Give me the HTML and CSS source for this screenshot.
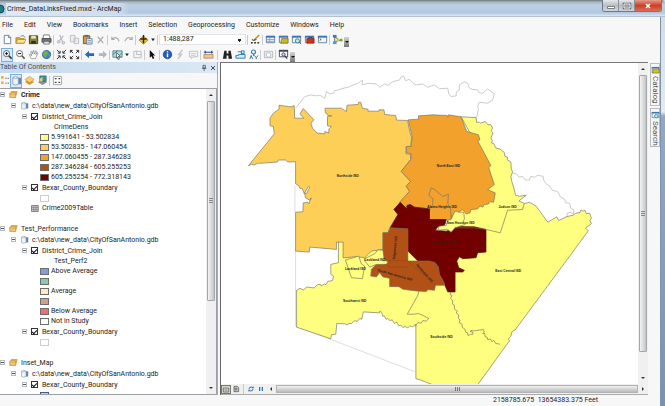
FILE: index.html
```html
<!DOCTYPE html>
<html lang="en">
<head>
<meta charset="utf-8">
<title>Crime_DataLinksFixed.mxd - ArcMap</title>
<link rel="stylesheet" href="styles.css">
</head>
<body>
<svg class="defs" aria-hidden="true">
  <symbol id="caret" viewBox="0 0 6 12"><path d="M1 5h4l-2 3z" fill="#222"/></symbol>
  <symbol id="win" viewBox="0 0 12 12"><path d="M1.500 2.500h9v7h-9z" fill="#eef5fc" stroke="#67809c"/><path d="M1 2h10v2H1z" fill="#3f74b8"/></symbol>
  <symbol id="frames" viewBox="0 0 12 12"><path d="M3 2h8l-2 6H2z" fill="#f3b44c" stroke="#b87a1e" stroke-width=".7"/><path d="M1 4h8v6H1z" fill="#fbd98c" stroke="#b87a1e" stroke-width=".8"/><path d="M1 6h8M1 8h8" stroke="#cf9335" stroke-width=".7"/></symbol>
  <symbol id="db" viewBox="0 0 12 12"><path d="M6 3h5v7H6z" fill="#5b87b9"/><path d="M2 3q3-3 6 0v7q-3 2-6 0z" fill="#eef3f8" stroke="#8297ae" stroke-width=".8"/><path d="M2 3q3 2 6 0" fill="none" stroke="#8297ae" stroke-width=".7"/></symbol>
</svg>
<div class="window">
  <header class="titlebar">
    <svg class="app-icon" viewBox="0 0 6 12"><circle cx="0" cy="6" r="4" fill="#1f7f83" stroke="#174a50"/></svg>
    <h1>Crime_DataLinksFixed.mxd - ArcMap</h1>
    <div class="winbtns">
      <button aria-label="Minimize"><svg viewBox="0 0 16 10"><path d="M4.500 5.500h7v2h-7z" fill="#fff" stroke="#666" stroke-width=".8"/></svg></button>
      <button aria-label="Maximize"><svg viewBox="0 0 16 10"><path d="M5 3h6v4H5z" fill="none" stroke="#666" stroke-width="2.400"/><path d="M5 3h6v4H5z" fill="none" stroke="#fff"/></svg></button>
      <button class="close" aria-label="Close"><svg viewBox="0 0 16 10"><path d="M6 3l4 4M10 3L6 7" stroke="#fff" stroke-width="1.600"/></svg></button>
    </div>
  </header>
  <div class="body">
    <nav class="menubar">
      <button>File</button><button>Edit</button><button>View</button><button>Bookmarks</button><button>Insert</button><button>Selection</button><button>Geoprocessing</button><button>Customize</button><button>Windows</button><button>Help</button>
    </nav>
    <div class="toolbar">
      <button aria-label="New"><svg viewBox="0 0 12 12"><path d="M2.500 1.500h5l2 2v7h-7z" fill="#fff" stroke="#6b7f95"/><path d="M7 1.500v2.500h2.500" fill="none" stroke="#6b7f95"/></svg></button>
      <button aria-label="Open"><svg viewBox="0 0 12 12"><path d="M1 4h4l1 1h4v5H1z" fill="#e6b432" stroke="#8c6d12" stroke-width=".7"/><path d="M3 6h9l-2 4H1z" fill="#ffe28a" stroke="#a78118" stroke-width=".7"/><path d="M6 3q3-3 5 1" fill="none" stroke="#5b7b9a"/></svg></button>
      <button aria-label="Save"><svg viewBox="0 0 12 12"><path d="M1.500 2h9v8.500h-9z" fill="#8a8434" stroke="#3c3a1b"/><path d="M3.500 2h5v3h-5z" fill="#e4e4d8"/><path d="M3.500 7.500h5v3h-5z" fill="#2e2e2a"/></svg></button>
      <button aria-label="Print"><svg viewBox="0 0 12 12"><path d="M3 1h6l1 4H2z" fill="#fff" stroke="#555" stroke-width=".8"/><path d="M1 5h10v4H1z" fill="#777" stroke="#333" stroke-width=".7"/><path d="M3 8h6v3H3z" fill="#e9e9e9" stroke="#444" stroke-width=".7"/></svg></button>
      <i class="sep"></i>
      <button aria-label="Cut"><svg viewBox="0 0 12 12" fill="none" stroke="#b5bac0" stroke-width="1.300"><path d="M4 1l3 7M8 2L4 7"/><circle cx="3" cy="8.500" r="1.300"/><circle cx="8" cy="9.500" r="1.300"/></svg></button>
      <button aria-label="Copy"><svg viewBox="0 0 12 12" fill="#eee" stroke="#b9bcc0"><path d="M1.500 1.500h5v7h-5zM5.500 4.500h5v6h-5z"/></svg></button>
      <button aria-label="Paste"><svg viewBox="0 0 12 12"><path d="M1.500 2h7v8.500h-7z" fill="#d99a3a" stroke="#75501d"/><path d="M3 1h4v2H3z" fill="#667"/><path d="M5 5h6v6H5z" fill="#eaf2fb" stroke="#4d6e9b" stroke-width=".8"/><path d="M6 7h4M6 9h4" stroke="#4d6e9b" stroke-width=".7"/></svg></button>
      <button aria-label="Delete"><svg viewBox="0 0 12 12"><path d="M3 3l6 7M9 3l-6 7" stroke="#a5a9ad" stroke-width="1.300"/></svg></button>
      <i class="sep"></i>
      <button aria-label="Undo"><svg viewBox="0 0 12 12"><path d="M2 3v3h3M2 6q5-5 8 2" fill="none" stroke="#a9adb2" stroke-width="1.300"/></svg></button>
      <button aria-label="Redo"><svg viewBox="0 0 12 12"><path d="M10 3v3H7M10 6Q5 1 2 8" fill="none" stroke="#a9adb2" stroke-width="1.300"/></svg></button>
      <i class="sep"></i>
      <button aria-label="Add data"><svg viewBox="0 0 12 12"><path d="M1 6.500l5-4 5 4-5 4.500z" fill="#f7c437" stroke="#9c741a" stroke-width=".8"/><path d="M6 1v9M2.500 5.500h7" stroke="#2a2412" stroke-width="1.600"/></svg></button>
      <button class="drop" aria-label="Add data options"><svg viewBox="0 0 6 12"><use href="#caret"/></svg></button>
      <i class="sep"></i>
      <select class="scale" aria-label="Map scale"><option>1:488,287</option></select>
      <i class="sep"></i>
      <button aria-label="Editor toolbar"><svg viewBox="0 0 12 12"><path d="M1 9.500h10" stroke="#333" stroke-width="1.500" stroke-dasharray="2 1.500"/><path d="M4 7l6-6" stroke="#c08f26" stroke-width="1.600"/><path d="M2 6l2 1 3-1" stroke="#333" fill="none"/></svg></button>
      <i class="sep"></i>
      <button aria-label="Table of contents"><svg viewBox="0 0 12 12"><use href="#win"/><path d="M2 6h8M2 8h8M5 4v5" stroke="#6ba0db" stroke-width=".9"/></svg></button>
      <button aria-label="Catalog window"><svg viewBox="0 0 12 12"><use href="#win"/><path d="M4 5h7v5H3z" fill="#c9b72c" stroke="#6b6a16" stroke-width=".7"/></svg></button>
      <button aria-label="Search window"><svg viewBox="0 0 12 12"><use href="#win"/><circle cx="7" cy="7.500" r="2.300" fill="#bfe7dc" stroke="#2c8a76"/><path d="M9 9l2 2" stroke="#2c6a76"/></svg></button>
      <button aria-label="ArcToolbox"><svg viewBox="0 0 12 12"><use href="#win"/><path d="M3 5h8v5H3z" fill="#d3301f" stroke="#7a1810" stroke-width=".7"/><path d="M5 5V4h4v1" stroke="#7a1810" fill="none"/></svg></button>
      <button aria-label="Python window"><svg viewBox="0 0 12 12"><use href="#win"/><path d="M3 5l1.500 1L3 7" fill="none" stroke="#333" stroke-width=".8"/></svg></button>
      <i class="sep"></i>
      <button aria-label="ModelBuilder"><svg viewBox="0 0 12 12"><path d="M3 3v6M3 3l4 3M3 9l4-2h3" stroke="#446" fill="none" stroke-width=".9"/><path d="M1 1h4v3H1z" fill="#377fc4"/><path d="M1 8h4v3H1z" fill="#49a0c9"/><path d="M5 5h3v3H5z" fill="#e0c136"/><circle cx="10" cy="6.500" r="1.700" fill="#5fac53"/></svg></button>
      <button class="more" aria-label="Toolbar options"></button>
    </div>
    <div class="toolbar">
      <button class="on" aria-label="Zoom in"><svg viewBox="0 0 12 12"><circle cx="5" cy="5" r="3.300" fill="#fff" stroke="#555"/><path d="M3.300 5h3.400M5 3.300v3.400" stroke="#111"/><path d="M7.500 7.500l3 3" stroke="#333" stroke-width="1.800"/></svg></button>
      <button aria-label="Zoom out"><svg viewBox="0 0 12 12"><circle cx="5" cy="5" r="3.300" fill="#fff" stroke="#666"/><path d="M3.300 5h3.400" stroke="#111"/><path d="M7.500 7.500l3 3" stroke="#555" stroke-width="1.600"/></svg></button>
      <button aria-label="Pan"><svg viewBox="0 0 12 12"><path d="M3.500 10.500L1.500 6l1.500 0 1 1.500L3 3l1-.5 1 3L5.500 2l1-.3.3 3.800L8.500 2l.8.600L8.500 6l1.500-2 .7.500L9 8.500l-1 2z" fill="#fff" stroke="#848990" stroke-width=".8"/></svg></button>
      <button aria-label="Full extent"><svg viewBox="0 0 12 12"><circle cx="6" cy="6" r="4.500" fill="#3f86c8" stroke="#2a5378" stroke-width=".8"/><path d="M3 3q3-2 5 1l-2 3-1 3q-3-2-3-5zM8 6l2 0-1 3z" fill="#6fae57"/></svg></button>
      <i class="sep"></i>
      <button aria-label="Fixed zoom in"><svg viewBox="0 0 12 12" stroke="#222" fill="none"><path d="M1 1l3 3M11 1L8 4M1 11l3-3M11 11L8 8"/><path d="M2 4.500h2.500V2M10 4.500H7.500V2M2 7.500h2.500V10M10 7.500H7.500V10"/></svg></button>
      <button aria-label="Fixed zoom out"><svg viewBox="0 0 12 12" stroke="#222" fill="none"><path d="M1.500 1.500l3 3M10.500 1.500l-3 3M1.500 10.500l3-3M10.500 10.500l-3-3M1.500 4V1.500H4M8 1.500h2.500V4M1.500 8v2.500H4M8 10.500h2.500V8"/></svg></button>
      <i class="sep"></i>
      <button aria-label="Back"><svg viewBox="0 0 12 12"><path d="M1 6l4.500-4v2.500H11v3H5.500V10z" fill="#2466c0"/></svg></button>
      <button aria-label="Forward"><svg viewBox="0 0 12 12"><path d="M11 6L6.500 2v2.500H2v3h4.500V10z" fill="#b3b7bc"/></svg></button>
      <i class="sep"></i>
      <button aria-label="Select features"><svg viewBox="0 0 12 12"><path d="M1 2h10v7H1z" fill="#b6dcd7" stroke="#3a7c8c" stroke-width=".9"/><path d="M1 6l5-4M6 9l5-5" stroke="#3a7c8c"/><path d="M5 4l4 4H7l1 3-1.500.4-.8-2.600L5 10z" fill="#fff" stroke="#234" stroke-width=".7"/></svg></button>
      <button class="drop" aria-label="Selection options"><svg viewBox="0 0 6 12"><use href="#caret"/></svg></button>
      <button aria-label="Clear selection"><svg viewBox="0 0 12 12"><path d="M2 2.500h8v7H2zM5 2v4h5" fill="#f4f4f4" stroke="#b9bcc0"/></svg></button>
      <i class="sep"></i>
      <button aria-label="Select elements"><svg viewBox="0 0 12 12"><path d="M3 1l6 6H6.500L8 10l-1.700.9L5 7.800 3 9.500z" fill="#111"/></svg></button>
      <i class="sep"></i>
      <button aria-label="Identify"><svg viewBox="0 0 12 12"><circle cx="6" cy="6" r="4.700" fill="#2360b5" stroke="#173f7d" stroke-width=".7"/><path d="M6 5v4M6 2.500v1.300" stroke="#fff" stroke-width="1.500"/></svg></button>
      <button aria-label="Hyperlink"><svg viewBox="0 0 12 12"><path d="M8 1L4 6h3l-4 5" fill="none" stroke="#c0c3c7" stroke-width="1.500"/></svg></button>
      <button aria-label="HTML popup"><svg viewBox="0 0 12 12"><path d="M1.500 2.500h9v6h-5l-2 2v-2h-2z" fill="#f5f5f5" stroke="#bcbfc3"/><path d="M3 5h6M3 7h5" stroke="#bcbfc3" stroke-width=".8"/></svg></button>
      <i class="sep"></i>
      <button aria-label="Measure"><svg viewBox="0 0 12 12"><path d="M1 6h10v4H1z" fill="#f1c59b" stroke="#a66c3a" stroke-width=".7"/><path d="M1 3.500h10M2.500 2v3M9.500 2v3" stroke="#1d4f9e" stroke-width="1.200"/></svg></button>
      <i class="sep wide"></i>
      <button aria-label="Find"><svg viewBox="0 0 12 12"><path d="M2.500 2h2.500v3h2V2h2.500l1.500 8.500H7V7H5v3.500H1z" fill="#222"/></svg></button>
      <button aria-label="Go to XY"><svg viewBox="0 0 12 12"><path d="M4 6h7v4H1V7h3zM7 2h3v3H7z" fill="#d7ecf7" stroke="#2c7ca9"/><path d="M3 3h4v3" fill="none" stroke="#2c7ca9"/></svg></button>
      <button aria-label="Find route"><svg viewBox="0 0 12 12"><circle cx="6" cy="3.300" r="2.200" fill="none" stroke="#2c82b4" stroke-width="1.300"/><path d="M6 5.500v2M2 11l1.500-4L5 11M7 7l2 2.500L11 7M9 9.500V11" stroke="#2c6e96" fill="none"/></svg></button>
      <i class="sep"></i>
      <button aria-label="Time slider"><svg viewBox="0 0 12 12"><path d="M1.500 2.500h9v7h-9z" fill="#eee" stroke="#b6babf"/><circle cx="6" cy="6.500" r="2.500" fill="#fff" stroke="#b6babf"/></svg></button>
      <i class="sep"></i>
      <button aria-label="Viewer window"><svg viewBox="0 0 12 12"><path d="M1.500 1.500h9v7h-9z" fill="#fff" stroke="#445"/><path d="M1 1h10v2H1z" fill="#445"/><circle cx="6" cy="6" r="1.800" fill="#cde" stroke="#446"/><path d="M7.500 7.500l2.500 3" stroke="#334" stroke-width="1.300"/></svg></button>
      <button class="more" aria-label="Toolbar options"></button>
    </div>
    <div class="work">
      <aside class="toc">
        <div class="toc-head"><h2>Table Of Contents</h2>
          <button aria-label="Auto hide"><svg viewBox="0 0 12 12"><path d="M4.500 2h3.500v4H4.500zM3 6.500h6.500M6.200 7v3.500" fill="none" stroke="#333"/></svg></button>
          <button aria-label="Close panel"><svg viewBox="0 0 12 12"><path d="M3 3l6 6M9 3L3 9" stroke="#333" stroke-width="1.300"/></svg></button>
        </div>
        <div class="toolbar toc-tools">
          <button class="half" aria-label="List by drawing order"><svg viewBox="3 0 9 12"><path d="M3 1h3v3H3zM3 7h3v3H3z" fill="#e8b63f"/><path d="M8 3.500h4M8 9h4" stroke="#555" stroke-dasharray="1.500 1"/></svg></button>
          <button class="on" aria-label="List by source"><svg viewBox="0 0 12 12"><use href="#db"/></svg></button>
          <button aria-label="List by visibility"><svg viewBox="0 0 12 12"><path d="M1 7.500l5-3 5 3L6 11z" fill="#d59a32"/><path d="M1 5l5-3.500L11 5 6 8.500z" fill="#fbd06a" stroke="#b88229" stroke-width=".6"/></svg></button>
          <button aria-label="List by selection"><svg viewBox="0 0 12 12"><path d="M1 8l5-3 5 3-5 3z" fill="#8e9294"/><path d="M3 1h7v6H3z" fill="#37939a" stroke="#22636b" stroke-width=".7"/><path d="M3 4l3-2v5H3z" fill="#e8cf67"/></svg></button>
          <i class="sep"></i>
          <button aria-label="Options"><svg viewBox="0 0 12 12"><path d="M1.500 1.500h9v9h-9z" fill="#fff" stroke="#9aa3ad"/><path d="M3 4h2M3 8h2M7 4h2M7 8h2" stroke="#444" stroke-width="1.300"/></svg></button>
        </div>
        <div class="tree-box">
          <div class="tree">
            <div class="row head"><button class="tw" aria-label="Collapse"></button><svg class="ic" viewBox="0 0 12 12"><use href="#frames"/></svg><b>Crime</b></div>
            <div class="row head l1"><button class="tw" aria-label="Collapse"></button><svg class="ic" viewBox="0 0 12 12"><use href="#db"/></svg><span>c:\data\new_data\CityOfSanAntonio.gdb</span></div>
            <div class="row head l2"><button class="tw" aria-label="Collapse"></button><label><input type="checkbox" checked>District_Crime_Join</label></div>
            <div class="row field">CrimeDens</div>
            <div class="row leg"><i class="sw c1"></i>5.991641 - 53.502834</div>
            <div class="row leg"><i class="sw c2"></i>53.502835 - 147.060454</div>
            <div class="row leg"><i class="sw c3"></i>147.060455 - 287.346283</div>
            <div class="row leg"><i class="sw c4"></i>287.346284 - 605.255253</div>
            <div class="row leg"><i class="sw c5"></i>605.255254 - 772.318143</div>
            <div class="row head l2"><button class="tw" aria-label="Collapse"></button><label><input type="checkbox" checked>Bexar_County_Boundary</label></div>
            <div class="row leg"><i class="sw pale"></i></div>
            <div class="row table"><svg class="ic" viewBox="0 0 12 12"><path d="M2 2h9v8H2z" fill="#ccc" stroke="#666"/><path d="M2 4.700h9M2 7.300h9M5 2v8M8 2v8" stroke="#777" stroke-width=".8"/></svg>Crime2009Table</div>
            <div class="row"></div>
            <div class="row head"><button class="tw" aria-label="Collapse"></button><svg class="ic" viewBox="0 0 12 12"><use href="#frames"/></svg><span>Test_Performance</span></div>
            <div class="row head l1"><button class="tw" aria-label="Collapse"></button><svg class="ic" viewBox="0 0 12 12"><use href="#db"/></svg><span>c:\data\new_data\CityOfSanAntonio.gdb</span></div>
            <div class="row head l2"><button class="tw" aria-label="Collapse"></button><label><input type="checkbox" checked>District_Crime_Join</label></div>
            <div class="row field">Test_Perf2</div>
            <div class="row leg"><i class="sw p1"></i>Above Average</div>
            <div class="row leg"><i class="sw p2"></i></div>
            <div class="row leg"><i class="sw p3"></i>Average</div>
            <div class="row leg"><i class="sw p4"></i></div>
            <div class="row leg"><i class="sw p5"></i>Below Average</div>
            <div class="row leg"><i class="sw"></i>Not in Study</div>
            <div class="row head l2"><button class="tw" aria-label="Collapse"></button><label><input type="checkbox" checked>Bexar_County_Boundary</label></div>
            <div class="row leg"><i class="sw pale"></i></div>
            <div class="row"></div>
            <div class="row head"><button class="tw" aria-label="Collapse"></button><svg class="ic" viewBox="0 0 12 12"><use href="#frames"/></svg><span>Inset_Map</span></div>
            <div class="row head l1"><button class="tw" aria-label="Collapse"></button><svg class="ic" viewBox="0 0 12 12"><use href="#db"/></svg><span>c:\data\new_data\CityOfSanAntonio.gdb</span></div>
            <div class="row head l2"><button class="tw" aria-label="Collapse"></button><label><input type="checkbox" checked>Bexar_County_Boundary</label></div>
            <div class="row leg"><i class="sw p6"></i></div>
          </div>
          <div class="vbar"><i class="arr up"></i><i class="thumb t-tree"></i><i class="rest"></i><i class="arr down"></i></div>
        </div>
      </aside>
      <main class="view">
        <div class="map-row">
          <svg class="map" viewBox="666 189 1248 966" preserveAspectRatio="xMidYMid meet" role="img" aria-label="School districts by crime density">
            <g fill="none" stroke="#cbcbcb" stroke-width="3" stroke-linejoin="round">
              <path d="M887 325L915 290 935 285 950 288 960 286 975 295 980 275 990 282 1002 279 1005 272 1015 270 1030 265 1045 262 1060 255 1075 250 1082 244 1088 241 1088 255 1105 250 1130 252 1140 262 1155 252 1165 256 1180 245 1200 240 1205 230 1212 228 1218 242 1230 238 1240 250 1250 255 1270 252 1285 262 1305 255 1320 266 1345 265 1348 282 1355 290 1370 288 1371 276 1380 270 1380 255 1395 245 1405 250 1409 263 1418 268 1435 270 1440 279 1450 280 1465 267 1485 282 1480 300 1465 310 1440 307 1435 320 1437 330 1432 353"/>
              <path d="M1540 520l12 3 8 10 10-3 7 10 13 2 5-12 12 3 8-6 17 3 2 12 8 12 10 5 7 13 17 4 8 16 13 7 2 10 13 3 3 14 10 5-2 13-9-6-9 3-2 11 7-1"/>
              <path d="M885 558v80M887 755v225l359 138" stroke-width="2"/>
            </g>
            <g stroke="#77735f" stroke-width="2" stroke-linejoin="round">
              <path fill="#ffff7f" d="M1385 351l45 2 2 15 8-1 4 3 14-5 8 10 8-1 6 11-4 7 5 8-6 15 4 7-2 8 6 1 7 14 12 3 13 10 2 12 8 2-1 8 11 7 1 20 4 10-5 14 3 16 5 15 6 25 12 3 20-3-22 17 17 8 15-4 20 12 35 48 27-16 6 11 25-12 18-4 8-6 13-2 3-8 6 4 6-3 4 10 10-1 5 15-4 7 4 10-17 13 8 8-220 298-10 6-3 13-8 9 4 5-23 31-85 118h-80l-80-31-14-4V975l-10 8-8-3-6 6-9-4-6 3-6-7-7 2-6-11-7 4-6-11-8 2-5-6-6 2-5-10-5 1-3-12-6-3 0 5-49-3-5 22-6-2-7 8-10-1-7 8-10 0-3 5-7-4-25-1-3 32-13 2-2 12-103-35V873l10-6 10 5 11-9 22 3 10-10 9-1 2 5 10-6 5 2 5-10 14-2 3-14-8-5v-30l23-5V700h340v-80l90-160z"/>
              <path fill="#fdcf57" d="M745 498L823 402 820 380 810 378 810 355 820 340 837 328 837 316 865 320 878 321 880 317 883 318 884 355 912 355 900 343 910 326 942 360 933 370 938 385 952 400 975 402 975 395 987 400 987 388 995 380 983 378 983 350 996 348 983 346 980 340 976 338V325h49l15 10 2-19 33-2 2-7h6l5 18 17 3v6h33v-4h15l2 14 33 3 3 14 33 1 4 20 3 14 5 18-3 28h-14v20l14 2v16L1205 515l28 30-13 15 10 15-28 35-19 20 12 15-25 40-5 15h-15v50l-35 5-20 20-25-3-35 3h-5v-47h-20v22l-80-7-2 15-41-3V638l22-1 1-27 14-2 3 5 7-18-4 7-13-7-3-15 6 2 10-20-4-2-13 22-6-15-7-1-3-7-10-7v-66l-23 1-7-6h-22l-3 6-40 3-20 1-10 5-8-2z"/>
              <path fill="#f2a22c" d="M1226 360l31-2v-10l43-3 43 2 2 6 2-8 38 6 17 44 35 10 5 15-7 3 40 75-7 5 17 52-20 15 23 10-5 28-12-2-3 7-13 2-5 8-8-4-7 9-20 2-3 10-12 3-10-13-15 9-20 11-5 20-10-10h-50v-32l-45-5-13-8-10 3v10l-17-8-5-12 30-33-10-15 13-15-28-30 30-37v-16l-14-2v-20h14l3-28z"/>
              <path fill="#f2a22c" d="M1290 628l10-8v-23l-12-10 7-22 10 4 25 22 17-7-2 28 8 12 2 33-7 13-8-10h-50z"/>
              <path fill="#730000" stroke="#511008" d="M1172 685l23-40-12-15 19-22 20 20v-10l10-3 13 8 45 5v32h50l-5 18-20 4-7 10 32 3 20-6 5-8 60 1 35 8v68l-25 2-5 15-40 3-10-6-8 13 6 20 17 8-5 5h-23v60h-22l-10-23-70-60-60-60z"/>
              <path fill="#b15116" d="M1172 685l53 3v97h65l17 5 10 13 3 22 15 27v6h-27l-3 15-20-2-5 6-30-2-40-5-12-8h-28v-25l-20-4-10-13-10 13-17-3 2-20 15-15 25-2-5-23v-70h15z"/>
              <path fill="#ffff7f" d="M1095 778l30-15 10-12 15 2 3 25 12 10-5 7-30 0-20 8-8-10-7-8z"/>
              <path fill="#ffff7f" d="M1037 782l40-12 8 24 10 6-7 38-33-3z"/>
              <path fill="#ffff7f" d="M1365 638l5-3 8 3 15 0 2 20-4 10 6 7-30 10-12 13-10-8-30 2 4-12 21-2 5-16 10-2z"/>
              <g fill="none">
                <path d="M1575 612l-5 18-45 2-22 68-43-10-35-5h-60"/>
                <path d="M1354 878l-2 8 6 3-5 8 6 6 1 12 5 3 0 12 9 6-4 5 7 5 1 13 4 4-3 7 9 5 1 10 8 5 2 9 5 2 2 8 7-3 8-1-2-7-6 0 1-4 10 1 28-4 3 8-5 4 7 1 0 8 7 3 1 6 9-1 3 7 7-3 5 9 13 2"/>
                <path d="M1258 875l-4 15-31 55h20l14-2 14 6 17 9-9 8-9-2-5 8-10-2-9 13"/>
                <path d="M1150 784h75M1155 795l15 8 55 0M1225 785l83 73" stroke="#964817"/>
              </g>
            </g>
            <g class="labels">
              <text x="1044" y="532">Northside ISD</text>
              <text x="1347" y="503">North East ISD</text>
              <text x="1328" y="625">Alamo Heights ISD</text>
              <text x="1525" y="624">Judson ISD</text>
              <text x="1378" y="675">Ft Sam Houston ISD</text>
              <text x="1342" y="733">San Antonio ISD</text>
              <text x="1527" y="817">East Central ISD</text>
              <text x="1126" y="785">Lackland ISD</text>
              <text x="1067" y="811">Lackland ISD</text>
              <text x="1065" y="908">Southwest ISD</text>
              <text x="1326" y="1018">Southside ISD</text>
              <text transform="translate(1189 745) rotate(-84)">Edgewood ISD</text>
              <text transform="translate(1185 830) rotate(16)">South San Antonio ISD</text>
              <text transform="translate(1272 823) rotate(48)">Harlandale ISD</text>
            </g>
          </svg>
          <div class="vbar"><i class="arr up"></i><i class="thumb t-map"></i><i class="rest"></i><i class="arr down"></i></div>
        </div>
        <div class="view-bar">
          <button class="pressed" aria-label="Data view"><svg viewBox="0 0 12 12"><path d="M2 3h8v6H2z" fill="#ddd" stroke="#555"/><path d="M2 6h8M6 3v6" stroke="#777" stroke-width=".8"/></svg></button>
          <button aria-label="Layout view"><svg viewBox="0 0 12 12"><path d="M3 2h5l2 2v6H3z" fill="#ccc" stroke="#444"/><path d="M4 5h4M4 7h4" stroke="#444"/></svg></button>
          <i class="sep wide"></i>
          <button aria-label="Refresh"><svg viewBox="0 0 12 12"><path d="M3 6q0-3 4-3l2 1M9 6q0 3-4 3l-2-1" fill="none" stroke="#2a66b4" stroke-width="1.500"/><path d="M10 2v3H7zM2 10V7h3z" fill="#2a66b4"/></svg></button>
          <button aria-label="Pause drawing"><svg viewBox="0 0 12 12"><path d="M4 3v6M8 3v6" stroke="#2a66b4" stroke-width="1.800"/></svg></button>
          <i class="arr left"></i><i class="hthumb"></i><i class="arr right"></i>
        </div>
      </main>
      <aside class="dock">
        <button><svg viewBox="0 0 12 12"><use href="#win"/><path d="M3 5h8v5H2z" fill="#d4c021" stroke="#6b6a16" stroke-width=".7"/></svg><span>Catalog</span></button>
        <button><svg viewBox="0 0 12 12"><use href="#win"/><circle cx="7" cy="7.500" r="2.300" fill="#bfe7dc" stroke="#2c8a76"/></svg><span>Search</span></button>
      </aside>
    </div>
    <footer class="status"><output>2158785.675&nbsp; 13654383.375 Feet</output></footer>
  </div>
</div>
</body>
</html>
```
FILE: styles.css
```css
* { box-sizing: border-box; }
html, body { height: 100%; margin: 0; }
body { font: 7px/10px Roboto, "Open Sans", sans-serif; color: #1c1c1c; overflow: hidden; }
button { border: 0; padding: 0; background: none; font: inherit; color: inherit; }
i { display: block; flex: none; }
.defs { position: absolute; width: 0; height: 0; }

.window {
  height: 100%;
  display: flex;
  flex-direction: column;
  padding-right: 4px;
  background: linear-gradient(#c9dcef 0, #dfebf6 112px, #8aa9d2 116px, #7492c0 100%);
}
.titlebar {
  flex: none;
  height: 17px;
  margin-right: -4px;
  display: flex;
  align-items: center;
  background: linear-gradient(#6f757b 0, #a8b5c2 2px, #bccfe4 5px, #b3c8e1 13px, #dbe8f4 16px, #8c99a8 17px);
  border-top-right-radius: 4px;
}
.app-icon { width: 6px; height: 12px; flex: none; }
.titlebar h1 {
  margin: 0;
  padding: 0 8px 0 1px;
  font: 7px/12px Roboto, "Open Sans", sans-serif;
  background: linear-gradient(90deg, #dfeaf6, #cddceb 92%, transparent);
}
.winbtns { margin: 0 3px 0 auto; align-self: flex-start; display: flex; height: 12px; border: 1px solid #6e7883; border-top: 0; border-radius: 0 0 3px 3px; overflow: hidden; }
.winbtns button { width: 16px; height: 11px; background: linear-gradient(#e4e8ec, #b8bec6 50%, #d0d6dd); border-right: 1px solid #89919a; }
.winbtns .close { width: 26px; border: 0; background: linear-gradient(#e79a88, #c9402a 50%, #df6d50); }
.winbtns svg { display: block; width: 16px; height: 10px; margin: auto; }

.body { flex: 1; min-height: 0; display: flex; flex-direction: column; background: #f7f7f8; border-right: 1px solid #8492a2; }
.menubar { flex: none; height: 15px; display: flex; align-items: center; gap: 11px; padding-left: 2px; }
.menubar button { line-height: 12px; }

.toolbar { flex: none; height: 15px; display: flex; align-items: center; gap: 1px; padding-left: 1px; }
.toolbar button { flex: none; width: 12px; height: 14px; display: grid; place-items: center; }
.toolbar button svg { width: 11px; height: 11px; }
.toolbar .drop { width: 6px; }
.toolbar .drop svg { width: 6px; }
.toolbar .on { background: #d8ebfb; box-shadow: inset 0 0 0 1px #7aaede; }
.sep { width: 1px; height: 10px; background: #c9cbce; }
.sep.wide { margin: 0 2px; }
.toolbar .more { width: 5px; height: 10px; align-self: flex-end; background: linear-gradient(#d5d5d5, #777); }
.more::after { content: ""; border: 2px solid transparent; border-top-color: #111; border-bottom: 0; }
.scale {
  width: 87px;
  height: 11px;
  padding: 0 3px;
  border: 1px solid #e1e3e6;
  border-radius: 0;
  appearance: none;
  font: inherit;
  line-height: 9px;
  color: #222;
  background: linear-gradient(135deg, #222 50%, transparent 50%) no-repeat right 3px top 4px / 3px 3px, linear-gradient(225deg, #222 50%, transparent 50%) no-repeat right 5px top 4px / 3px 3px, #fff;
}

.work { flex: 1; min-height: 0; display: grid; grid-template-columns: 218px minmax(0, 1fr) 10px; column-gap: 2px; }
.toc { display: flex; flex-direction: column; min-height: 0; border-right: 1px solid #a8adb3; }
.toc-head { flex: none; height: 11px; display: flex; align-items: center; background: linear-gradient(90deg, #c6d9ec, #dbe8f5); }
.toc-head h2 { flex: 1; margin: 0; font: 7px/11px Roboto, "Open Sans", sans-serif; color: #444f5c; white-space: nowrap; }
.toc-head button { width: 9px; height: 11px; display: grid; place-items: center; }
.toc-head svg { width: 8px; height: 8px; }
.toc-tools { padding-left: 0; }
.toolbar .half { width: 9px; }
.toolbar .half svg { width: 8px; }
.tree-box { flex: 1; min-height: 0; display: flex; border: 1px solid #9aa0a6; border-left: 0; background: #fff; overflow: hidden; }
.tree { flex: 1; min-width: 0; }
.row { height: 10px; display: flex; align-items: center; white-space: nowrap; }
.row.head { height: 11px; }
.row label { display: flex; align-items: center; gap: 4px; }
.row input { appearance: none; flex: none; width: 7px; height: 7px; margin: 0; border: 1px solid #333; background: #fff; display: grid; place-items: center; }
.row input:checked::before { content: ""; width: 4px; height: 2px; margin-bottom: 1px; border: solid #111; border-width: 0 0 1px 1px; rotate: -45deg; }
.l1 { padding-left: 11px; }
.l2 { padding-left: 22px; }
.tw { flex: none; width: 5px; height: 5px; background: linear-gradient(#555, #555) center / 3px 1px no-repeat #fff; }
.row .tw { border: 1px solid #b5b9be; }
.ic { flex: none; width: 9px; height: 9px; margin: 0 3px 0 4px; }
.l2 .tw { margin-right: 4px; }
.field { padding-left: 54px; }
.table { padding-left: 26px; }
.leg { padding-left: 40px; gap: 2px; }
.sw { width: 9px; height: 7px; border: 1px solid #6e6e6e; background: #fff; }
.pale { border-color: #ccc; }
.c1 { background: #ffff7f; } .c2 { background: #fdcf57; } .c3 { background: #f2a22c; } .c4 { background: #b15116; } .c5 { background: #730000; }
.p1 { background: #8c9bd8; } .p2 { background: #86cdb0; } .p3 { background: #ffe9bd; } .p4 { background: #cfa08c; } .p5 { background: #f56c78; } .p6 { background: #bcd3f0; border-color: #3c5c94; }

.vbar { flex: none; width: 10px; display: flex; flex-direction: column; align-items: center; background: #f0f0f1; }
.arr { width: 10px; height: 12px; display: grid; place-items: center; }
.arr::before { content: ""; border: 2px solid transparent; }
.up::before { border-bottom-color: #333; border-top: 0; }
.down::before { border-top-color: #333; border-bottom: 0; }
.left::before { border-right-color: #333; border-left: 0; }
.right::before { border-left-color: #333; border-right: 0; }
.thumb { width: 8px; border: 1px solid #a3a6aa; border-radius: 1px; background: repeating-linear-gradient(#888 0 1px, transparent 1px 2px) center / 4px 5px no-repeat, linear-gradient(90deg, #f3f3f3, #c4c5c7); }
.t-tree { flex: 200; }
.t-tree + .rest { flex: 82; }
.t-map { flex: 279; }
.t-map + .rest { flex: 20; }

.view { display: flex; flex-direction: column; min-height: 0; min-width: 0; border-top: 1px solid #777; border-left: 1px solid #666; }
.map-row { flex: 1; min-height: 0; display: flex; background: #fff; }
.map { flex: 1; min-width: 0; height: 100%; }
.labels { font: bold 10px "Liberation Sans", Arial, sans-serif; text-anchor: middle; fill: #222; }
.view-bar { flex: none; height: 11px; display: flex; align-items: center; background: #f0f0f1; border-bottom: 1px solid #aaa; }
.view-bar button { flex: none; width: 10px; height: 9px; display: grid; place-items: center; }
.view-bar svg { width: 8px; height: 8px; }
.view-bar .pressed { border: 1px solid #777; background: #d8d5c4; }
.hthumb { flex: 1; height: 8px; border: 1px solid #b0b2b5; background: repeating-linear-gradient(90deg, #777 0 1px, transparent 1px 2px) center / 5px 4px no-repeat, linear-gradient(#f0f0f0, #b9babc); }

.dock { display: flex; flex-direction: column; gap: 2px; padding-top: 1px; }
.dock button { flex: none; width: 10px; padding: 1px 0; border: 1px solid #b9bdc2; display: flex; flex-direction: column; align-items: center; gap: 1px; }
.dock svg { width: 9px; height: 10px; }
.dock span { writing-mode: vertical-rl; font-size: 8px; line-height: 8px; color: #555; }
.status { flex: none; height: 11px; display: flex; justify-content: flex-end; padding-right: 62px; line-height: 11px; }
```
